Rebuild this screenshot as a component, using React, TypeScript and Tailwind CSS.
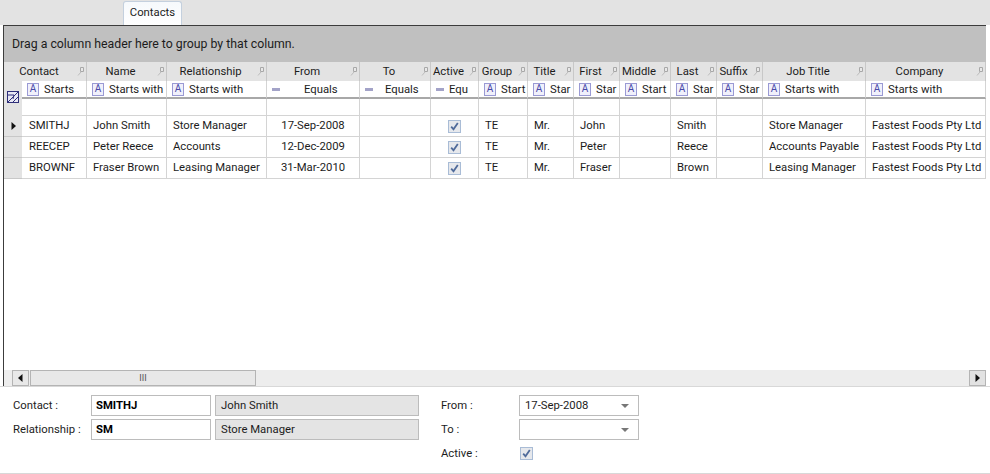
import React from "react"

const cols = "grid-cols-[18px_65px_80px_100px_93px_71px_48px_49px_46px_46px_51px_46px_46px_103px_120px]"

type Col = { title: string; filter: string; kind: "text" | "eq"; gap?: string }

const columns: Col[] = [
  { title: "Contact", filter: "Starts", kind: "text" },
  { title: "Name", filter: "Starts with", kind: "text" },
  { title: "Relationship", filter: "Starts with", kind: "text" },
  { title: "From", filter: "Equals", kind: "eq", gap: "ml-[19px]" },
  { title: "To", filter: "Equals", kind: "eq", gap: "ml-[7px]" },
  { title: "Active", filter: "Equ", kind: "eq" },
  { title: "Group", filter: "Start", kind: "text" },
  { title: "Title", filter: "Star", kind: "text" },
  { title: "First", filter: "Star", kind: "text" },
  { title: "Middle", filter: "Start", kind: "text" },
  { title: "Last", filter: "Star", kind: "text" },
  { title: "Suffix", filter: "Star", kind: "text" },
  { title: "Job Title", filter: "Starts with", kind: "text" },
  { title: "Company", filter: "Starts with", kind: "text" },
]

const rows = [
  ["SMITHJ", "John Smith", "Store Manager", "17-Sep-2008", "", true, "TE", "Mr.", "John", "", "Smith", "", "Store Manager", "Fastest Foods Pty Ltd"],
  ["REECEP", "Peter Reece", "Accounts", "12-Dec-2009", "", true, "TE", "Mr.", "Peter", "", "Reece", "", "Accounts Payable", "Fastest Foods Pty Ltd"],
  ["BROWNF", "Fraser Brown", "Leasing Manager", "31-Mar-2010", "", true, "TE", "Mr.", "Fraser", "", "Brown", "", "Leasing Manager", "Fastest Foods Pty Ltd"],
]

function Pin() {
  return (
    <svg width="7" height="9" viewBox="0 0 7 9" className="absolute right-[2px] top-[5px]">
      <path d="M3.5 0.5h3v4h-3z" fill="#e8e8e8" stroke="#a8a8a8" strokeWidth="1" />
      <path d="M4 5L1 8.5" stroke="#bcbcbc" strokeWidth="1" />
    </svg>
  )
}

function CheckMark() {
  return (
    <svg width="13" height="13" viewBox="0 0 13 13" className="block">
      <rect x="0.5" y="0.5" width="12" height="12" fill="#e6e8ec" stroke="#a9bcd6" />
      <path d="M3.2 6.6l2.3 2.7L9.8 3" fill="none" stroke="#4f6a9a" strokeWidth="1.8" />
    </svg>
  )
}

function Caret({ dir }: { dir: "left" | "right" }) {
  return (
    <svg width="5" height="8" viewBox="0 0 5 8">
      <path d={dir === "left" ? "M4.5 0v8L0 4z" : "M0.5 0v8L5 4z"} fill="#111" />
    </svg>
  )
}

function ClearFilterIcon() {
  return (
    <svg width="12" height="12" viewBox="0 0 12 12">
      <rect x="0.5" y="0.5" width="11" height="11" fill="#e8e8f4" stroke="#2f2f7a" />
      <path d="M1 11L11 1M6 11L11 6M1 4h6l-1 4" fill="none" stroke="#2f2f7a" strokeWidth="1" />
    </svg>
  )
}

function FilterOp({ kind }: { kind: Col["kind"] }) {
  if (kind === "eq") return <span className="h-[3px] w-[8px] shrink-0 bg-[#a3a3c8]" />
  return (
    <span className="flex h-[13px] w-[12px] shrink-0 items-center justify-center border border-[#9a9ad4] bg-[#f0f0fb] text-[10px] leading-none text-[#4848a8]">
      A
    </span>
  )
}

function Field({ value, bold, readOnly, width }: { value: string; bold?: boolean; readOnly?: boolean; width: string }) {
  return (
    <div
      className={`flex h-[21px] items-center border border-[#bcbcbc] pl-[4px] pt-[1px] ${width} ${bold ? "font-bold text-black" : ""} ${
        readOnly ? "bg-[#e4e4e4] pl-[5px]" : "bg-white"
      }`}
    >
      {value}
    </div>
  )
}

function Combo({ value }: { value: string }) {
  return (
    <div className="flex h-[21px] w-[120px] items-center justify-between border border-[#bcbcbc] bg-white pl-[5px] pr-[9px] pt-[1px]">
      <span>{value}</span>
      <span className="h-0 w-0 border-x-[4px] border-t-[4px] border-x-transparent border-t-[#777]" />
    </div>
  )
}

export default function App() {
  return (
    <div className="flex h-[474px] w-[990px] flex-col overflow-hidden bg-white font-['Roboto',sans-serif] text-[11.3px] leading-none text-[#1c1c1c]">
      <div className="h-[25px] shrink-0 bg-[#e3e3e3] pl-[123px] pt-[1px]">
        <div className="flex h-[24px] w-[59px] items-center justify-center rounded-t-[3px] border border-b-0 border-[#c4d0de] bg-gradient-to-b from-[#f6f9fc] to-[#ffffff] pb-[2px]">
          Contacts
        </div>
      </div>

      <div className="ml-[3px] mr-[4px] flex h-[361px] shrink-0 flex-col border-l border-t border-l-[#3c3c3c] border-t-[#3c3c3c]">
        <div className="flex h-[36px] shrink-0 items-center bg-[#c0c0c0] pl-[8px] text-[12.3px]">Drag a column header here to group by that column.</div>

        <div className={`grid h-[19px] shrink-0 ${cols} bg-[#e3e3e3]`}>
          {columns.map((col, i) => (
            <div
              key={col.title}
              className={`relative flex items-center justify-center border-r border-[#c8c8c8] pr-[12px] ${i === 0 ? "col-span-2" : ""}`}
            >
              {col.title}
              <Pin />
            </div>
          ))}
        </div>

        <div className={`grid h-[35px] shrink-0 ${cols} grid-rows-[18px_17px]`}>
          <div className="row-span-2 flex items-center justify-center bg-[#e3e3e3] pb-[4px]">
            <ClearFilterIcon />
          </div>
          {columns.map((col) => (
            <div key={col.title} className="flex items-center gap-[5px] overflow-hidden border-b-2 border-r border-b-[#a8a8a8] border-r-[#d4d4d4] pl-[5px]">
              <FilterOp kind={col.kind} />
              <span className={`whitespace-nowrap pt-[2px] ${col.gap ?? ""}`}>{col.filter}</span>
            </div>
          ))}
          {columns.map((col) => (
            <div key={col.title} className="border-b border-r border-[#d4d4d4]" />
          ))}
        </div>

        {rows.map((row, r) => (
          <div key={r} className={`grid h-[21px] shrink-0 ${cols}`}>
            <div className="flex items-center justify-center border-b border-[#c8c8c8] bg-[#e3e3e3]">{r === 0 && <Caret dir="right" />}</div>
            {row.map((cell, c) => (
              <div
                key={c}
                className={`flex items-center whitespace-nowrap border-b border-r border-[#d4d4d4] ${
                  c === 3 || c === 5 ? "justify-center" : c === 0 ? "pl-[7px]" : "pl-[6px]"
                }`}
              >
                {cell === true ? <CheckMark /> : cell}
              </div>
            ))}
          </div>
        ))}

        <div className="flex-1" />

        <div className="flex h-[16px] shrink-0 bg-[#ededed] pl-[8px]">
          <div className="flex w-[17px] items-center justify-center border border-[#b4b4b4] bg-[#e8e8e8]">
            <Caret dir="left" />
          </div>
          <div className="ml-[1px] flex w-[226px] items-center justify-center border border-[#b4b4b4] bg-[#e8e8e8] text-[9px] text-[#555]">
            III
          </div>
          <div className="flex-1" />
          <div className="flex w-[17px] items-center justify-center border border-[#b4b4b4] bg-[#e2e2e2]">
            <Caret dir="right" />
          </div>
        </div>
      </div>

      <div className="flex flex-1 border-y border-y-[#d8d8d8] pl-[13px] pt-[8px]">
        <div className="flex w-[428px] shrink-0 flex-col gap-[3px]">
          <div className="flex items-center">
            <span className="w-[78px] pt-[1px]">Contact :</span>
            <Field value="SMITHJ" bold width="w-[120px]" />
            <span className="w-[4px]" />
            <Field value="John Smith" readOnly width="w-[204px]" />
          </div>
          <div className="flex items-center">
            <span className="w-[78px] pt-[1px]">Relationship :</span>
            <Field value="SM" bold width="w-[120px]" />
            <span className="w-[4px]" />
            <Field value="Store Manager" readOnly width="w-[204px]" />
          </div>
        </div>
        <div className="flex flex-col gap-[3px]">
          <div className="flex items-center">
            <span className="w-[78px] pt-[1px]">From :</span>
            <Combo value="17-Sep-2008" />
          </div>
          <div className="flex items-center">
            <span className="w-[78px] pt-[1px]">To :</span>
            <Combo value="" />
          </div>
          <div className="flex h-[21px] items-center">
            <span className="w-[79px] pt-[1px]">Active :</span>
            <CheckMark />
          </div>
        </div>
      </div>
    </div>
  )
}
